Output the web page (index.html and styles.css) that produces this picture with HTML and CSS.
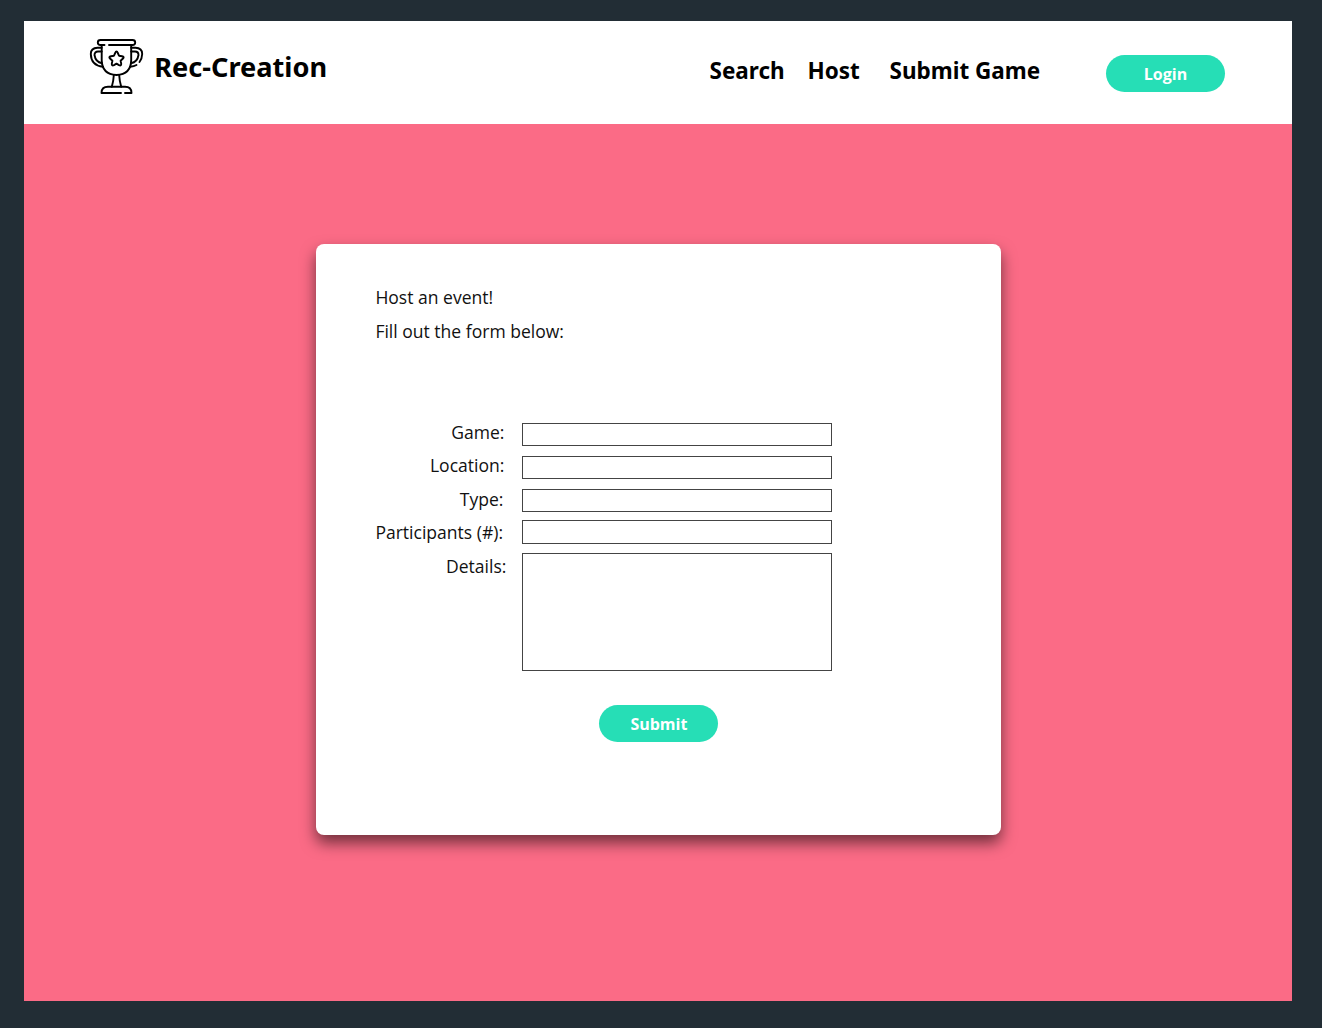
FILE: index.html
```html
<!DOCTYPE html>
<html lang="en">
<head>
<meta charset="utf-8">
<title>Rec-Creation</title>
<link rel="stylesheet" href="styles.css">
</head>
<body>
<div class="page">
  <header class="header">
    <a class="brand">
      <svg class="trophy" viewBox="0 0 56 58" fill="none" stroke="#000" stroke-width="1.9" stroke-linecap="round" stroke-linejoin="round">
        <path d="M20 7H43.5Q46.200 7 46.200 4.500Q46.200 2 43.500 2H11.500Q8.800 2 8.800 4.500Q8.800 7 11.500 7H15.500"/>
        <path d="M12.700 7V22Q13 36.500 27.500 37Q42 36.500 42.200 22V7"/>
        <path d="M12.700 9.800H8.500Q1.800 10 1.800 16Q2 27.500 14 28.800M12.700 13.500H9Q5.500 13.500 5.500 17Q6.500 24 13 25.200"/>
        <path d="M42.200 9.800H46.500Q53.200 10 53.200 16Q53 21 50.500 24M47.500 27Q45 28.500 41.200 28.800M42.200 13.500H46Q49.500 13.500 49.500 17Q48.500 24 42 25.200"/>
        <path d="M27.500 13.500Q28.300 13.500 28.800 15L30 17.700L33 18.200Q35.700 18.800 34 20.500L31.600 22.800L32.200 25.600Q32.500 28.300 30 27.100L27.500 25.700L25 27.100Q22.500 28.300 22.800 25.600L23.400 22.800L21 20.500Q19.300 18.800 22 18.200L25 17.700L26.200 15Q26.700 13.500 27.500 13.500Z"/>
        <path d="M24.800 37.200Q24.500 43 22.800 48.800M30.200 37.200Q30.500 43 32.200 48.800"/>
        <path d="M32 55H12.500Q12.500 48.800 19 48.800H36Q42.500 48.800 42.500 55H36"/>
      </svg>
      <span class="brand-name">Rec-Creation</span>
    </a>
    <nav class="nav">
      <a class="search">Search</a>
      <a class="host">Host</a>
      <a class="submit-game">Submit Game</a>
    </nav>
    <button class="button login">Login</button>
  </header>
  <main class="main">
    <form class="card">
      <p class="intro">Host an event!</p>
      <p class="intro">Fill out the form below:</p>
      <div class="fields">
        <div class="row"><label class="label" for="game">Game:</label><input class="field" id="game"></div>
        <div class="row"><label class="label" for="location">Location:</label><input class="field" id="location"></div>
        <div class="row type"><label class="label" for="type">Type:</label><input class="field" id="type"></div>
        <div class="row participants"><label class="label" for="participants">Participants (#):</label><input class="field" id="participants"></div>
        <div class="row details"><label class="label" for="details">Details:</label><textarea class="field" id="details"></textarea></div>
      </div>
      <button class="button submit" type="button">Submit</button>
    </form>
  </main>
</div>
</body>
</html>
```
FILE: styles.css
```css
* { box-sizing: border-box; }
body {
  margin: 0;
  height: 1028px;
  padding: 21px 30px 27px 24px;
  background: #222d35;
  font-family: "Noto Sans", sans-serif;
  color: #000;
  overflow: hidden;
}
.page { height: 980px; background: #fb6b86; }
.header {
  display: flex;
  align-items: flex-start;
  height: 102.7px;
  padding-left: 65px;
  background: #fff;
}
.brand { display: flex; width: 620.500px; white-space: nowrap; }
.trophy { width: 56px; height: 58px; margin-top: 17px; }
.brand-name { margin: 27px 0 0 9.200px; font-size: 27.200px; line-height: 38px; font-weight: 700; }
.nav { display: flex; width: 396px; padding-top: 34px; font-size: 22.500px; line-height: 31px; font-weight: 700; white-space: nowrap; }
.search { width: 98px; }
.host { width: 82px; }
.button {
  display: block;
  width: 119px;
  height: 37px;
  padding: 1px 0 0;
  border: 0;
  border-radius: 19px;
  background: #26deb6;
  color: #fff;
  font: 700 16px "Open Sans", sans-serif;
}
.login { margin-top: 34px; padding-left: 1px; }
.main { padding: 120.600px 0 0 292.400px; }
.card {
  width: 684.500px;
  height: 591px;
  padding: 37px 0 0 59px;
  border-radius: 8px;
  background: #fff;
  box-shadow: 0 8px 15px rgba(0, 0, 0, .55);
  font-family: "Open Sans", sans-serif;
  font-size: 17.550px;
  color: #111;
}
.intro { margin: 0; line-height: 33.600px; }
.fields { display: flex; flex-direction: column; padding-top: 75px; }
.row { display: flex; height: 23px; margin-bottom: 10px; }
.label { width: 129px; margin-right: 17.600px; line-height: 18px; text-align: right; white-space: nowrap; }
.field {
  width: 310.500px;
  height: 23px;
  padding: 2px 5px;
  border: 1px solid #444;
  border-radius: 0;
  background: #fff;
  font: inherit;
  resize: none;
  outline: 0;
}
.type { margin-bottom: 8px; }
.type .label { padding: 1px 1px 0 0; }
.participants { height: 24px; margin-bottom: 9px; }
.participants .field { height: 24px; }
.participants .label { width: 127px; padding-top: 3px; margin-right: 19.600px; }
.details { height: 118px; margin-bottom: 0; }
.details .field { height: 118px; }
.details .label { width: 131px; padding-top: 4px; margin-right: 15.600px; }
.submit { margin: 34px 0 0 223.500px; padding-left: 1px; }
```
